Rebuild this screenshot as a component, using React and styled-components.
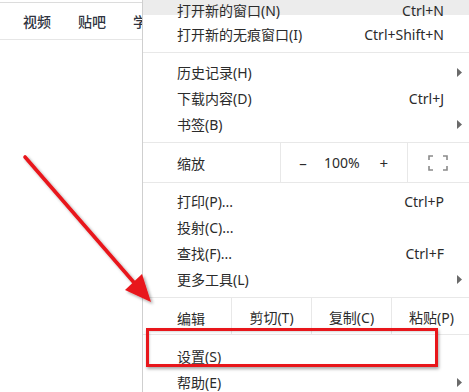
import React from "react";
import styled, { createGlobalStyle } from "styled-components";

const Global = createGlobalStyle`
  html, body { margin: 0; padding: 0; background: #fff; }
  body { font-family: "Noto Sans", "Noto Sans CJK SC", sans-serif; }
  #root { width: 469px; height: 392px; }
`;

const Page = styled.div`
  position: relative;
  width: 469px;
  height: 392px;
  overflow: hidden;
  background: #fff;
`;

const TopLine = styled.div`
  height: 2px;
  border-bottom: 1px solid #dcdcdc;
`;

const Nav = styled.nav`
  display: flex;
  gap: 27px;
  padding-left: 23px;
  height: 36px;
  align-items: center;
  border-bottom: 1px solid #e6e6e6;
  font-size: 14px;
  font-weight: 500;
  color: #2f3440;
`;

const NavItem = styled.span`
  white-space: nowrap;
`;

const Menu = styled.div`
  position: absolute;
  top: 0;
  left: 142px;
  width: 340px;
  height: 400px;
  background: #fff;
  border-left: 1px solid #cfcfcf;
  font-size: 14px;
  color: #2b2b2b;
`;

const Section = styled.div`
  padding: ${(p) => p.$pad || "5px 0 5px"};
`;

const Sep = styled.div`
  height: 1px;
  background: #e8e8e8;
`;

const Row = styled.div`
  display: grid;
  grid-template-columns: 1fr auto 39px;
  align-items: center;
  height: ${(p) => p.$h || 26}px;
  padding-left: 34px;
  background: ${(p) => (p.$hover ? "#ececec" : "transparent")};
  white-space: nowrap;
`;

const Shortcut = styled.span`
  text-align: right;
`;

const SubArrow = styled.span`
  display: flex;
  padding-left: 13px;
  svg { display: block; }
`;

const CellRow = styled.div`
  display: grid;
  grid-template-columns: ${(p) => p.$cols};
  height: ${(p) => p.$h}px;
`;

const Cell = styled.div`
  display: flex;
  align-items: center;
  justify-content: ${(p) => (p.$start ? "flex-start" : "center")};
  padding-left: ${(p) => (p.$start ? "34px" : "0")};
  border-left: ${(p) => (p.$first ? "none" : "1px solid #e8e8e8")};
  white-space: nowrap;
  padding-top: ${(p) => p.$dy || 0}px;
`;

const ZoomControls = styled.div`
  display: flex;
  align-items: center;
  width: 100%;
  padding-left: 16px;
  box-sizing: border-box;
`;

const ZoomSign = styled.span`
  width: 12px;
  text-align: center;
  font-size: 15px;
`;

const ZoomValue = styled.span`
  margin: 0 18px 0 15px;
`;

const FullBox = styled.div`
  display: flex;
  align-items: center;
  width: 100%;
  padding-left: 20px;
  svg { display: block; }
`;

const RedBox = styled.div`
  position: absolute;
  left: 146px;
  top: 328px;
  width: 286px;
  height: 33px;
  border: 3px solid #e8161b;
  box-shadow: 1px 2px 3px rgba(0, 0, 0, 0.35), inset 1px 1px 2px rgba(0,0,0,0.15);
  pointer-events: none;
`;

const ArrowLayer = styled.svg`
  position: absolute;
  left: 0;
  top: 0;
  pointer-events: none;
`;

const Tri = () => (
  <svg width="5" height="9" viewBox="0 0 5 9">
    <path d="M0 0 L5 4.5 L0 9 Z" fill="#6a6a6a" />
  </svg>
);

const Fullscreen = () => (
  <svg width="20" height="16" viewBox="0 0 20 16" fill="none" stroke="#8a8a8a" strokeWidth="1.6">
    <path d="M1 5 V1 H5" />
    <path d="M15 1 H19 V5" />
    <path d="M19 11 V15 H15" />
    <path d="M5 15 H1 V11" />
  </svg>
);

const Item = ({ label, shortcut, sub, h, hover }) => (
  <Row $h={h} $hover={hover}>
    <span>{label}</span>
    <Shortcut>{shortcut}</Shortcut>
    <SubArrow>{sub ? <Tri /> : null}</SubArrow>
  </Row>
);

export default function App() {
  return (
    <>
      <Global />
      <Page>
        <TopLine />
        <Nav>
          <NavItem>视频</NavItem>
          <NavItem>贴吧</NavItem>
          <NavItem>学术</NavItem>
        </Nav>

        <Menu>
          <Item label="打开新的窗口(N)" shortcut="Ctrl+N" h={15} hover />
          <Section $pad="6px 0 5px">
            <Item label="打开新的无痕窗口(I)" shortcut="Ctrl+Shift+N" />
          </Section>
          <Sep />
          <Section $pad="6px 0 5px">
            <Item label="历史记录(H)" sub />
            <Item label="下载内容(D)" shortcut="Ctrl+J" />
            <Item label="书签(B)" sub />
          </Section>
          <Sep />
          <CellRow $cols="137px 127px 1fr" $h={39}>
            <Cell $start $first>缩放</Cell>
            <Cell>
              <ZoomControls>
                <ZoomSign>–</ZoomSign>
                <ZoomValue>100%</ZoomValue>
                <ZoomSign>+</ZoomSign>
              </ZoomControls>
            </Cell>
            <Cell>
              <FullBox>
                <Fullscreen />
              </FullBox>
            </Cell>
          </CellRow>
          <Sep />
          <Section $pad="5px 0 5px">
            <Item label="打印(P)..." shortcut="Ctrl+P" />
            <Item label="投射(C)..." />
            <Item label="查找(F)..." shortcut="Ctrl+F" />
            <Item label="更多工具(L)" sub />
          </Section>
          <Sep />
          <CellRow $cols="88px 80px 80px 80px" $h={36}>
            <Cell $start $first $dy={4}>编辑</Cell>
            <Cell $dy={2}>剪切(T)</Cell>
            <Cell $dy={2}>复制(C)</Cell>
            <Cell $dy={2}>粘贴(P)</Cell>
          </CellRow>
          <Sep />
          <Section $pad="8px 0 5px">
            <Item label="设置(S)" />
            <Item label="帮助(E)" sub />
          </Section>
        </Menu>

        <RedBox />

        <ArrowLayer width="469" height="392" viewBox="0 0 469 392">
          <defs>
            <filter id="sh" x="-20%" y="-20%" width="140%" height="140%">
              <feDropShadow dx="2" dy="2" stdDeviation="1.6" floodColor="#000" floodOpacity="0.35" />
            </filter>
          </defs>
          <g filter="url(#sh)">
            <line x1="25" y1="157" x2="137" y2="286" stroke="#e8161b" strokeWidth="3.6" strokeLinecap="round" />
            <polygon points="151,302 125,290 142,274" fill="#e8161b" />
          </g>
        </ArrowLayer>
      </Page>
    </>
  );
}
